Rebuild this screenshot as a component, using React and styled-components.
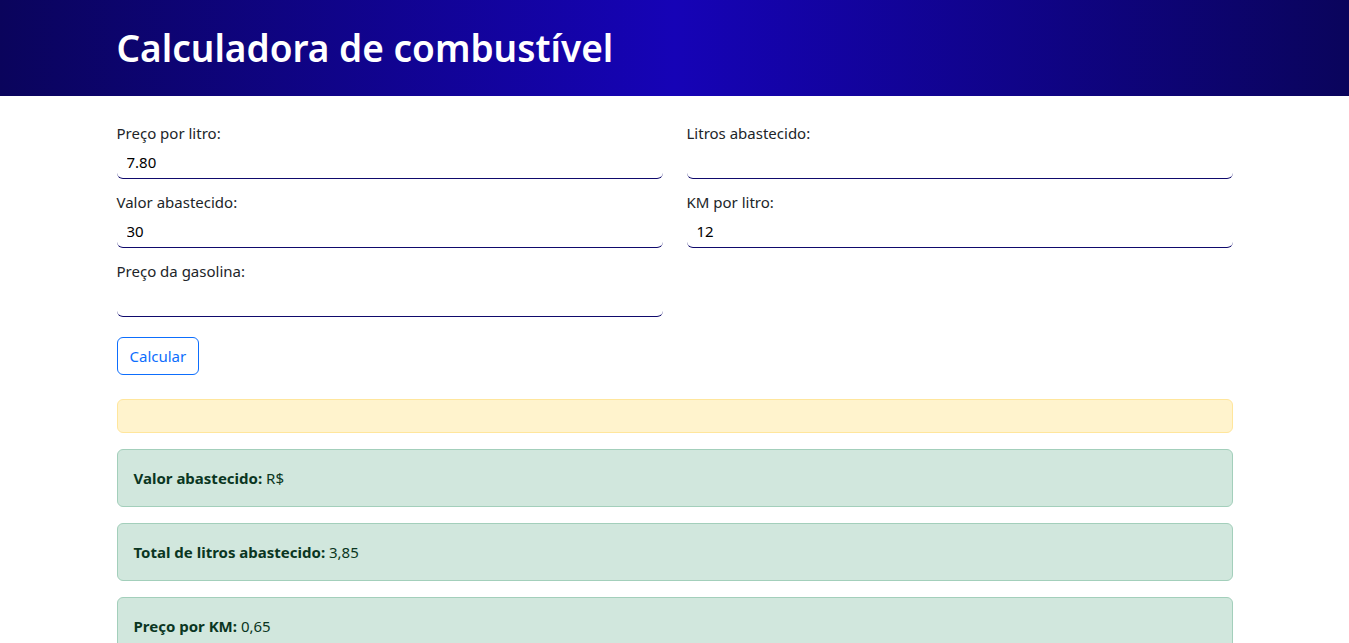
import React from 'react';
import styled, { createGlobalStyle } from 'styled-components';

const GlobalStyle = createGlobalStyle`
  * { box-sizing: border-box; }
  body {
    margin: 0;
    font-family: "Noto Sans", "Open Sans", sans-serif;
    font-size: 16px;
    line-height: 1.5;
    color: #212529;
    background: #fff;
  }
`;

const Header = styled.header`
  background: linear-gradient(90deg, #0a045c 0%, #1603b6 50%, #0a045c 100%);
  padding: 24px 0;
`;

const Container = styled.div`
  max-width: 1140px;
  margin: 0 auto;
  padding: 0 12px;
`;

const Title = styled.h1`
  margin: 0;
  color: #fff;
  font-size: 37px;
  font-weight: 600;
  line-height: 48px;
`;

const Form = styled.form`
  padding-top: 25px;
`;

const Grid = styled.div`
  display: grid;
  grid-template-columns: 1fr 1fr;
  column-gap: 24px;
  row-gap: 11px;
`;

const Field = styled.div`
  display: flex;
  flex-direction: column;
`;

const Label = styled.label`
  font-size: 15px;
  line-height: 24px;
  color: #212529;
`;

const Input = styled.input`
  height: 34px;
  border: none;
  border-bottom: 1px solid #0f0a6c;
  border-radius: 6px;
  padding: 0 10px;
  font-family: "Noto Sans", "Open Sans", sans-serif;
  font-size: 15px;
  color: #000;
  background: transparent;
  outline: none;
`;

const Button = styled.button`
  margin-top: 20px;
  height: 38px;
  padding: 6px 12px;
  font-family: inherit;
  font-size: 15px;
  line-height: 24px;
  color: #0d6efd;
  background: #fff;
  border: 1px solid #0d6efd;
  border-radius: 6px;
  cursor: pointer;
`;

const Alert = styled.div`
  margin-top: ${p => p.$first ? '24px' : '0'};
  margin-bottom: 16px;
  padding: 16px;
  min-height: ${p => p.$empty ? '34px' : '58px'};
  border-radius: 6px;
  border: 1px solid ${p => p.$tone === 'warning' ? '#ffe69c' : '#a3cfbb'};
  background: ${p => p.$tone === 'warning' ? '#fff3cd' : '#d1e7dd'};
  color: ${p => p.$tone === 'warning' ? '#664d03' : '#0a3622'};
  font-size: 15px;
  line-height: 24px;
`;

const fields = [
  { label: 'Preço por litro:', value: '7.80' },
  { label: 'Litros abastecido:', value: '' },
  { label: 'Valor abastecido:', value: '30' },
  { label: 'KM por litro:', value: '12' },
  { label: 'Preço da gasolina:', value: '' },
];

const results = [
  { label: 'Valor abastecido:', value: 'R$' },
  { label: 'Total de litros abastecido:', value: '3,85' },
  { label: 'Preço por KM:', value: '0,65' },
];

export default function App() {
  return (
    <>
      <GlobalStyle />
      <Header>
        <Container>
          <Title>Calculadora de combustível</Title>
        </Container>
      </Header>
      <Container>
        <Form onSubmit={e => e.preventDefault()}>
          <Grid>
            {fields.map(f => (
              <Field key={f.label}>
                <Label>{f.label}</Label>
                <Input defaultValue={f.value} />
              </Field>
            ))}
          </Grid>
          <Button type="submit">Calcular</Button>
        </Form>
        <Alert $tone="warning" $first $empty />
        {results.map(r => (
          <Alert key={r.label} $tone="success">
            <strong>{r.label}</strong> {r.value}
          </Alert>
        ))}
      </Container>
    </>
  );
}
